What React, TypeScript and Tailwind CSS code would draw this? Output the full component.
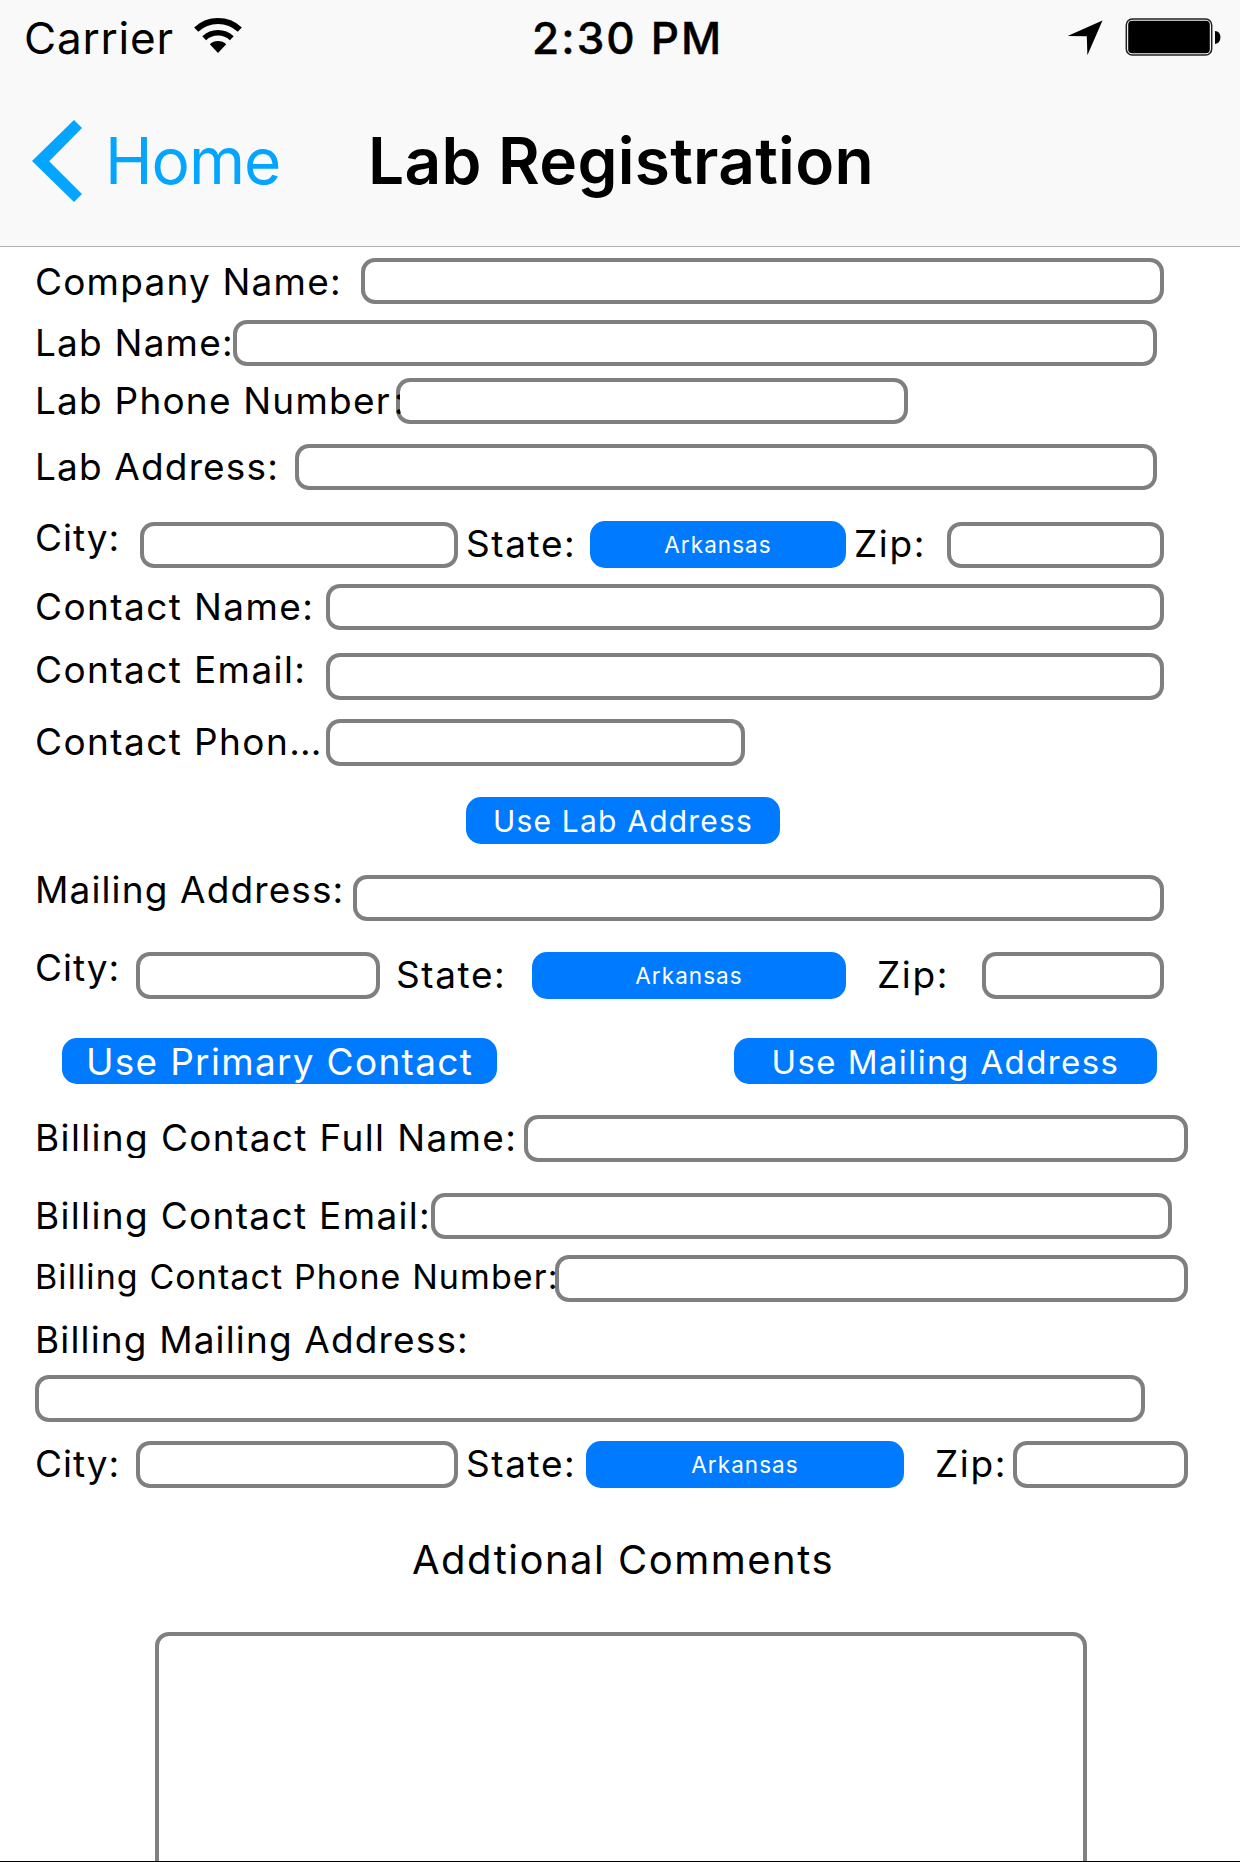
import type { ReactNode } from "react";

function Row({ className = "", children }: { className?: string; children: ReactNode }) {
  return <div className={`flex shrink-0 items-start pl-[35px] ${className}`}>{children}</div>;
}

function Label({ className = "", children }: { className?: string; children: ReactNode }) {
  return <label className={`block shrink-0 whitespace-nowrap leading-[46px] ${className}`}>{children}</label>;
}

function Field({ className = "" }: { className?: string }) {
  return (
    <input
      type="text"
      className={`block shrink-0 rounded-[14px] border-4 border-black/50 bg-white bg-clip-padding px-3 outline-none ${className}`}
    />
  );
}

function Button({ className = "", children }: { className?: string; children: ReactNode }) {
  return (
    <button
      type="button"
      className={`flex shrink-0 items-center justify-center whitespace-nowrap rounded-[15px] bg-[#007aff] text-white ${className}`}
    >
      {children}
    </button>
  );
}

function WifiIcon() {
  return (
    <svg className="ml-[20px] h-[36px] w-[48px]" viewBox="-24 -35 48 36" fill="none" stroke="#000">
      <path d="M-21.8 -23.4A32 32 0 0 1 21.8 -23.4" strokeWidth="6" />
      <path d="M-13.8 -14.8A20.3 20.3 0 0 1 13.8 -14.8" strokeWidth="5.6" />
      <path d="M0 0L-8.2 -8.8A12 12 0 0 1 8.2 -8.8Z" fill="#000" stroke="none" />
    </svg>
  );
}

function StatusBar() {
  return (
    <div className="grid h-[75px] grid-cols-[534px_1fr_auto] text-[44px] leading-[77px]">
      <div className="flex items-center pl-[24px]">
        <span className="tracking-[0.8px]">Carrier</span>
        <div className="-mt-[5px]">
          <WifiIcon />
        </div>
      </div>
      <span className="-ml-[2px] whitespace-nowrap font-medium tracking-[2.1px] [-webkit-text-stroke:0.4px_#000]">2:30 PM</span>
      <div className="flex items-start pr-[19px] pt-[18px]">
        <svg className="mr-[22px] mt-[2px] h-[36px] w-[36px]" viewBox="1067 20 36 36">
          <path d="M1102.5 20.6L1067.6 35.9L1086.8 36.2L1087.4 55.2Z" fill="#000" />
        </svg>
        <svg className="h-[38px] w-[96px]" viewBox="0 0 96 38">
          <rect x="1.3" y="0.9" width="85.4" height="36.2" rx="6" fill="#f9f9f9" stroke="#222" strokeWidth="1.5" />
          <rect x="3.2" y="2.8" width="81.6" height="32.4" rx="4" fill="#000" />
          <path d="M90 13Q95.4 13.5 95.4 19.3Q95.4 25.3 90 26Z" fill="#000" />
        </svg>
      </div>
    </div>
  );
}

function NavBar() {
  return (
    <div className="flex h-[171px] items-center pl-[32px] text-[64px] leading-[77px]">
      <svg className="h-[84px] w-[50px]" viewBox="0 0 50 84">
        <path d="M42 1L50 9L17.2 42.3L50 75L42 83L0 42Z" fill="#04a5ff" />
      </svg>
      <span className="ml-[23px] w-[263px] tracking-[-1px] text-[#04a5ff]">Home</span>
      <h1 className="whitespace-nowrap font-semibold tracking-[0.28px]">Lab Registration</h1>
    </div>
  );
}

export default function App() {
  return (
    <div className="flex h-[1862px] w-[1240px] flex-col overflow-hidden border-b border-black bg-white font-['Inter',sans-serif] text-black">
      <header className="h-[247px] shrink-0 border-b border-[#b2b2b2] bg-[#f9f9f9]">
        <StatusBar />
        <NavBar />
      </header>

      <form className="flex min-h-0 flex-1 flex-col text-[37px] tracking-[1.2px]">
        <Row className="mt-[11px] h-[46px]">
          <Label className="mt-px w-[326px]">Company Name:</Label>
          <Field className="h-[46px] w-[803px]" />
        </Row>
        <Row className="mt-[16px] h-[46px]">
          <Label className="w-[198px]">Lab Name:</Label>
          <Field className="h-[46px] w-[924px]" />
        </Row>
        <Row className="mt-[12px] h-[46px]">
          <Label className="w-[361px]">
            Lab Phone Number<span className="ml-[3px]">:</span>
          </Label>
          <Field className="h-[46px] w-[512px]" />
        </Row>
        <Row className="mt-[20px] h-[46px]">
          <Label className="w-[260px] tracking-[1.15px]">Lab Address:</Label>
          <Field className="h-[46px] w-[862px]" />
        </Row>
        <Row className="mt-[31px] h-[47px]">
          <Label className="-mt-[6px] w-[105px] tracking-[1px]">City:</Label>
          <Field className="mt-px h-[46px] w-[318px]" />
          <Label className="ml-[8px] w-[124px] tracking-[1.6px]">State:</Label>
          <Button className="h-[47px] w-[256px] text-[22.5px] tracking-[1.05px]">Arkansas</Button>
          <Label className="ml-[8px] w-[93px] tracking-[1.6px]">Zip:</Label>
          <Field className="mt-px h-[46px] w-[217px]" />
        </Row>
        <Row className="mt-[16px] h-[46px]">
          <Label className="w-[291px] tracking-[1.4px]">Contact Name:</Label>
          <Field className="h-[46px] w-[838px]" />
        </Row>
        <Row className="mt-[23px] h-[47px]">
          <Label className="-mt-[6px] w-[291px] tracking-[1.4px]">Contact Email:</Label>
          <Field className="h-[47px] w-[838px]" />
        </Row>
        <Row className="mt-[19px] h-[47px]">
          <Label className="w-[291px] tracking-[1.4px]">
            Contact Phon<span className="tracking-[0.2px]">...</span>
          </Label>
          <Field className="h-[47px] w-[419px]" />
        </Row>

        <Button className="ml-[466px] mt-[31px] h-[47px] w-[314px] pt-[2px] text-[30px] tracking-[1.2px]">Use Lab Address</Button>

        <Row className="mt-[31px] h-[46px]">
          <Label className="-mt-[8px] w-[318px] tracking-[1.12px]">Mailing Address:</Label>
          <Field className="h-[46px] w-[811px]" />
        </Row>
        <Row className="mt-[31px] h-[47px]">
          <Label className="-mt-[7px] w-[101px] tracking-[1px]">City:</Label>
          <Field className="h-[47px] w-[244px]" />
          <Label className="ml-[16px] w-[136px] tracking-[1.6px]">State:</Label>
          <Button className="h-[47px] w-[314px] text-[22.5px] tracking-[1.05px]">Arkansas</Button>
          <Label className="ml-[31px] w-[105px] tracking-[1.6px]">Zip:</Label>
          <Field className="h-[47px] w-[182px]" />
        </Row>

        <div className="mt-[39px] flex h-[46px] shrink-0 justify-between pl-[62px] pr-[83px]">
          <Button className="h-[46px] w-[435px] pt-[2px] tracking-[1.3px]">Use Primary Contact</Button>
          <Button className="h-[46px] w-[423px] pt-[3px] text-[33px] tracking-[1.42px]">Use Mailing Address</Button>
        </div>

        <Row className="mt-[31px] h-[47px]">
          <Label className="h-[43px] w-[489px] overflow-hidden tracking-[1.36px]">Billing Contact Full Name:</Label>
          <Field className="h-[47px] w-[664px]" />
        </Row>
        <Row className="mt-[31px] h-[46px]">
          <Label className="w-[396px] tracking-[1.33px]">Billing Contact Email:</Label>
          <Field className="h-[46px] w-[741px]" />
        </Row>
        <Row className="mt-[16px] h-[47px]">
          <Label className="-mt-px w-[520px] text-[34px] tracking-[1.09px]">Billing Contact Phone Number:</Label>
          <Field className="h-[47px] w-[633px]" />
        </Row>
        <Row className="mt-[15px] h-[46px]">
          <Label className="tracking-[1.14px]">Billing Mailing Address:</Label>
        </Row>
        <Row className="mt-[12px] h-[47px]">
          <Field className="h-[47px] w-[1110px]" />
        </Row>
        <Row className="mt-[19px] h-[47px]">
          <Label className="w-[101px] tracking-[1px]">City:</Label>
          <Field className="h-[47px] w-[322px]" />
          <Label className="ml-[8px] w-[120px] tracking-[1.6px]">State:</Label>
          <Button className="h-[47px] w-[318px] text-[22.5px] tracking-[1.05px]">Arkansas</Button>
          <Label className="ml-[31px] w-[78px] tracking-[1.6px]">Zip:</Label>
          <Field className="h-[47px] w-[175px]" />
        </Row>

        <h2 className="mt-[47px] h-[50px] shrink-0 pl-[6px] text-center text-[40px] leading-[50px] tracking-[1.5px]">
          Addtional Comments
        </h2>
        <textarea className="ml-[155px] mt-[47px] h-[300px] w-[932px] shrink-0 resize-none rounded-[14px] border-4 border-[#808080] bg-white outline-none" />
      </form>
    </div>
  );
}
